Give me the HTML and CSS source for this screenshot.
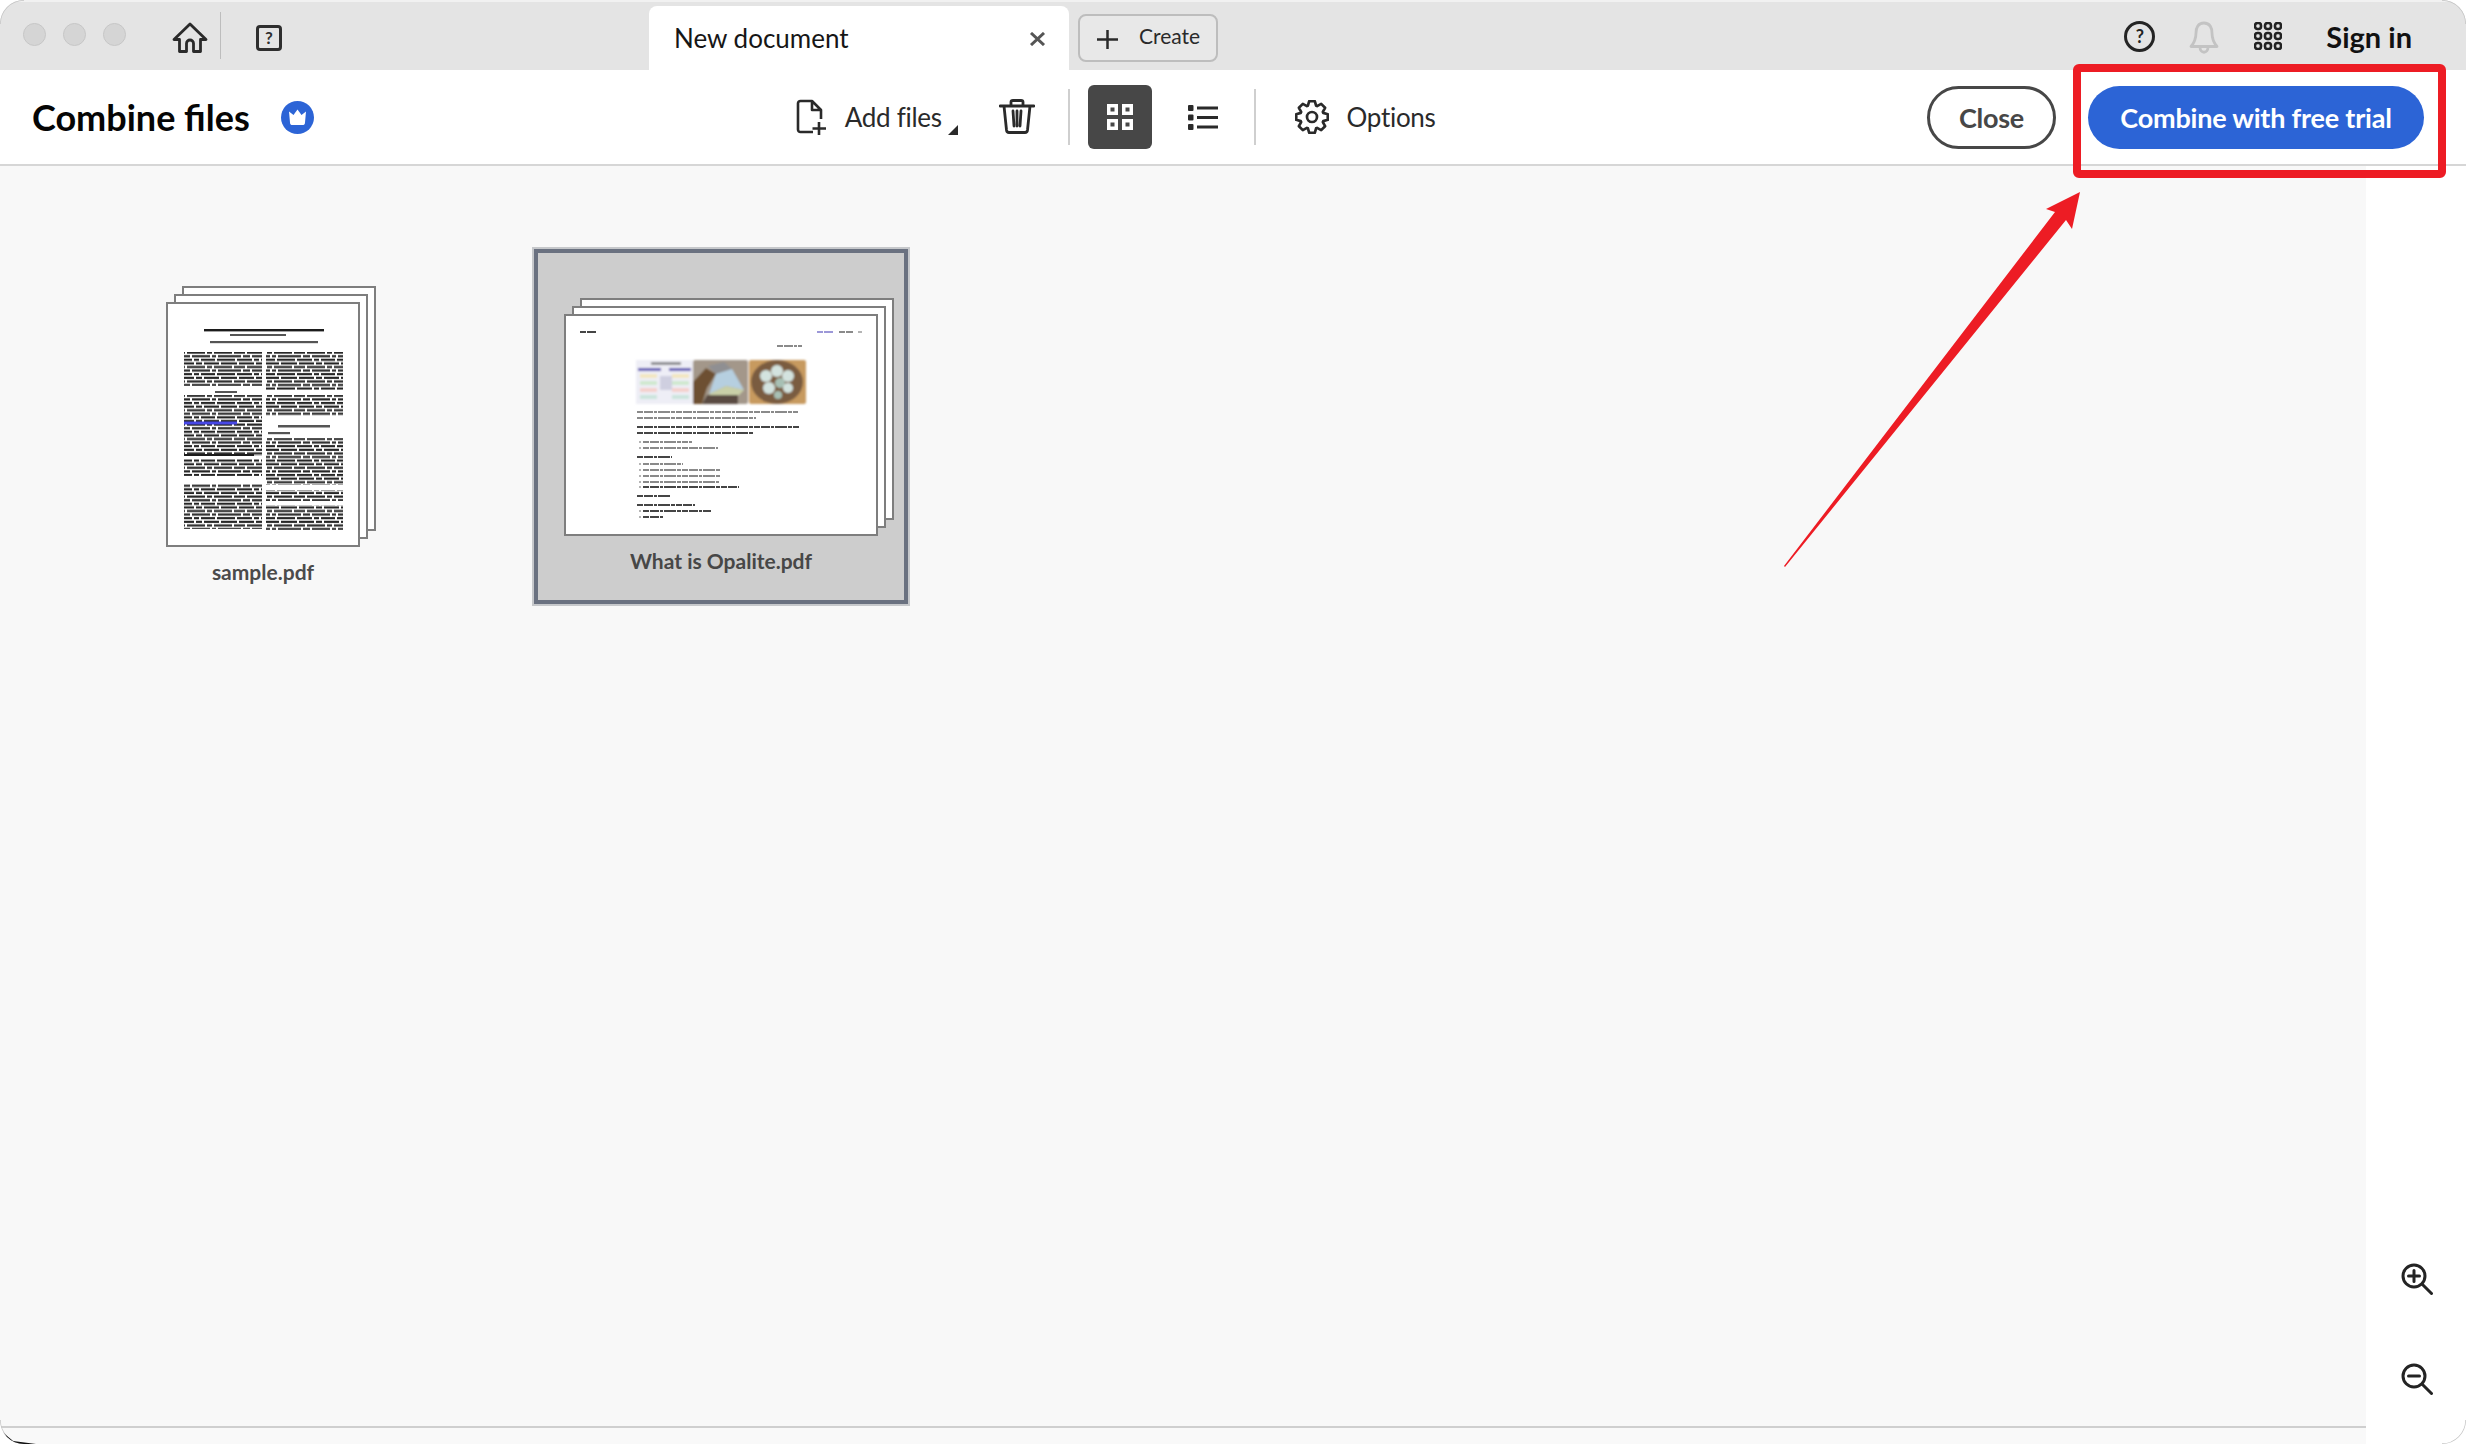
FILE: index.html
```html
<!DOCTYPE html>
<html lang="en">
<head>
<meta charset="utf-8">
<title>Combine files</title>
<link rel="stylesheet" href="styles.css">
</head>
<body>
<div class="window">
  <header class="titlebar">
    <div class="lights"><span class="light"></span><span class="light"></span><span class="light"></span></div>
    <svg class="ico-home" viewBox="0 0 36 32"><path d="M18 2 34 17.500H28.500V29.500H21.500V21.500A3.500 3.500 0 0 0 14.500 21.500V29.500H7.500V17.500H2Z"/></svg>
    <span class="tb-sep"></span>
    <span class="ico-qsquare">?</span>
    <div class="tab"><span class="tab-name">New document</span><svg class="ico-x" viewBox="0 0 17 14"><path d="M2 1 15 13M15 1 2 13"/></svg></div>
    <button class="create"><svg class="ico-plus" viewBox="0 0 21 19"><path d="M10.500 0V19M0 9.500H21"/></svg><span>Create</span></button>
    <div class="tb-right">
      <span class="ico-qcircle">?</span>
      <svg class="ico-bell" viewBox="0 0 30 33"><path d="M15 2C9 2 7 7 7 12 7 18 5 22 2 25.500H28C25 22 23 18 23 12 23 7 21 2 15 2ZM11 26C11 33 19 33 19 26"/></svg>
      <svg class="ico-apps" viewBox="0 0 28 28"><g><rect x="1" y="1" width="6" height="6" rx="2.500"/><rect x="11" y="1" width="6" height="6" rx="2.500"/><rect x="21" y="1" width="6" height="6" rx="2.500"/><rect x="1" y="11" width="6" height="6" rx="2.500"/><rect x="11" y="11" width="6" height="6" rx="2.500"/><rect x="21" y="11" width="6" height="6" rx="2.500"/><rect x="1" y="21" width="6" height="6" rx="2.500"/><rect x="11" y="21" width="6" height="6" rx="2.500"/><rect x="21" y="21" width="6" height="6" rx="2.500"/></g></svg>
      <span class="signin">Sign in</span>
    </div>
  </header>

  <div class="toolbar">
    <h1 class="title">Combine files</h1>
    <svg class="badge" viewBox="0 0 33 33"><circle cx="16.500" cy="16.500" r="16.500"/><path d="M8 10.500 12.500 14 16.500 8.500 20.500 14 25 10.500 24 21.500C24 23.500 23 24 21.500 24H11.500C10 24 9 23.500 9 21.500Z"/></svg>
    <div class="tools">
      <svg class="ico-add" viewBox="0 0 32 37"><path d="M17 33H4.500C3 33 2 32 2 30.500V4.500C2 3 3 2 4.500 2H16L25 11V20M16 2V11H25M23 23V36M16.500 29.500H30"/></svg>
      <span class="tool-label add-label">Add files</span>
      <span class="corner"></span>
      <svg class="ico-trash" viewBox="0 0 36 35"><path d="M1 7H35M12 7V3C12 2 13 1.500 14 1.500H22C23 1.500 24 2 24 3V7M5 7 7.500 31C7.700 32.500 8.500 33.500 10 33.500H26C27.500 33.500 28.300 32.500 28.500 31L31 7M14 12 15 27M22 12 21 27M18 12V27"/></svg>
      <span class="tool-sep sep-a"></span>
      <span class="grid-btn"><svg class="ico-grid" viewBox="0 0 28 28"><path d="M1 1H12V12H1ZM16 1H27V12H16ZM1 16H12V27H1ZM16 16H27V27H16Z"/><path class="grid-holes" d="M4.500 4.500H8.500V8.500H4.500ZM19.500 4.500H23.500V8.500H19.500ZM4.500 19.500H8.500V23.500H4.500ZM19.500 19.500H23.500V23.500H19.500Z"/></svg></span>
      <svg class="ico-list" viewBox="0 0 30 27"><path d="M9 4H30M9 13.500H30M9 23H30" class="list-lines"/><rect x="0" y="1" width="5.500" height="6" rx="1"/><rect x="0" y="10.500" width="5.500" height="6" rx="1"/><rect x="0" y="20" width="5.500" height="6" rx="1"/></svg>
      <span class="tool-sep sep-b"></span>
      <svg class="ico-gear" viewBox="0 0 34 34"><path d="M12.900 5.720 14.220 1.240H19.780L21.100 5.720 22.070 6.130 26.180 3.900 30.100 7.820 27.870 11.930 28.280 12.900 32.760 14.220V19.780L28.280 21.100 27.870 22.070 30.100 26.180 26.180 30.100 22.070 27.870 21.100 28.280 19.780 32.760H14.220L12.900 28.280 11.930 27.870 7.820 30.100 3.900 26.180 6.130 22.070 5.720 21.100 1.240 19.780V14.220L5.720 12.900 6.130 11.930 3.900 7.820 7.820 3.900 11.930 6.130Z"/><circle cx="17" cy="17" r="5"/></svg>
      <span class="tool-label">Options</span>
    </div>
    <button class="btn-close">Close</button>
    <button class="btn-primary">Combine with free trial</button>
  </div>

  <div class="body-row">
    <div class="left-col">
      <main class="canvas">
        <figure class="file">
          <div class="stack stack-tall">
            <div class="sheet sheet-back"></div>
            <div class="sheet sheet-mid"></div>
            <div class="sheet sheet-front">
              <svg class="thumb" viewBox="0 0 190 241">
                <defs>
                  <filter id="soft" x="-5%" y="-5%" width="110%" height="110%"><feGaussianBlur stdDeviation="0.65"/></filter>
                  <filter id="softer" x="-5%" y="-5%" width="110%" height="110%"><feGaussianBlur stdDeviation="1"/></filter>
                  <pattern id="words" width="60" height="14.400" patternUnits="userSpaceOnUse">
                    <path class="ink-text" d="M0 .7H9V2.900H0ZM11 .7H26V2.900H11ZM28 .7H34V2.900H28ZM36 .7H51V2.900H36ZM53 .7H60V2.900H53ZM0 4.300H4V6.500H0ZM6 4.300H17V6.500H6ZM19 4.300H37V6.500H19ZM39 4.300H44V6.500H39ZM46 4.300H60V6.500H46ZM0 7.900H13V10.100H0ZM15 7.900H22V10.100H15ZM24 7.900H42V10.100H24ZM44 7.900H48V10.100H44ZM50 7.900H60V10.100H50ZM0 11.500H7V13.700H0ZM9 11.500H24V13.700H9ZM26 11.500H31V13.700H26ZM33 11.500H47V13.700H33ZM49 11.500H60V13.700H49Z"/>
                  </pattern>
                </defs>
                <g filter="url(#soft)">
                  <rect class="ink" x="36" y="25" width="120" height="2.400"/>
                  <rect class="ink-mid" x="62" y="30" width="56" height="2"/>
                  <rect class="ink-mid" x="42" y="37" width="108" height="2.200"/>
                  <rect x="16" y="48" width="78" height="34" fill="url(#words)"/>
                  <rect class="ink-mid" x="47" y="87" width="22" height="2"/>
                  <rect x="16" y="91" width="78" height="61" fill="url(#words)"/>
                  <rect class="ink-blue" x="16" y="117.500" width="53" height="3"/>
                  <rect class="ink" x="16" y="150" width="70" height="2"/>
                  <rect x="16" y="155" width="78" height="17" fill="url(#words)"/>
                  <rect x="16" y="180" width="78" height="45" fill="url(#words)"/>
                  <rect x="98" y="48" width="77" height="38" fill="url(#words)"/>
                  <rect x="98" y="91" width="77" height="21" fill="url(#words)"/>
                  <rect class="ink-mid" x="110" y="121" width="52" height="2.500"/>
                  <rect class="ink-mid" x="100" y="128" width="22" height="2.200"/>
                  <rect x="98" y="134" width="77" height="47" fill="url(#words)"/>
                  <rect x="98" y="186" width="77" height="11" fill="url(#words)"/>
                  <rect x="98" y="201" width="77" height="25" fill="url(#words)"/>
                </g>
              </svg>
            </div>
          </div>
          <figcaption class="file-name">sample.pdf</figcaption>
        </figure>

        <figure class="file file-selected">
          <div class="stack stack-wide">
            <div class="sheet sheet-back"></div>
            <div class="sheet sheet-mid"></div>
            <div class="sheet sheet-front">
              <svg class="thumb" viewBox="0 0 310 218">
                <g filter="url(#soft)">
                  <path class="t-dark" d="M14 16H30"/>
                  <path class="t-violet" d="M251 16H267"/>
                  <path class="t-mid" d="M273 16H287M211 30H236"/>
                  <path class="t-pale" d="M292 16H296"/>
                  <path class="t-mid" d="M71 96H232M71 102H190M77 126H126M77 132H152M77 148H117M77 154H154M77 160H155M77 166H153"/>
                  <path class="t-dark" d="M71 111H234M71 117H188M71 141H106M77 171H173M71 180H104M71 189H129M77 195H145M77 201H97"/>
                  <path class="t-pale" d="M73 126H75M73 132H75M73 148H75M73 154H75M73 160H75M73 166H75M73 171H75M73 195H75M73 201H75"/>
                </g>
                <g filter="url(#softer)">
                  <rect class="p1" x="70" y="44" width="57" height="44"/>
                  <rect class="p1-a" x="72" y="52" width="23" height="3"/><rect class="p1-a" x="103" y="52" width="22" height="3"/>
                  <rect class="ink-mid" x="85" y="46.500" width="30" height="2"/>
                  <rect class="p1-b" x="74" y="58" width="17" height="4"/><rect class="p1-c" x="74" y="65" width="17" height="4"/><rect class="p1-d" x="74" y="72" width="17" height="4"/><rect class="p1-e" x="74" y="79" width="17" height="4"/>
                  <rect class="p1-b" x="106" y="58" width="17" height="4"/><rect class="p1-c" x="106" y="65" width="17" height="4"/><rect class="p1-d" x="106" y="72" width="17" height="4"/><rect class="p1-e" x="106" y="79" width="17" height="4"/>
                  <rect class="p1-f" x="94" y="60" width="12" height="14"/>
                  <rect class="p2" x="127" y="44" width="55" height="44" rx="2"/>
                  <path class="p2-g" d="M142 50 158 46 166 53 150 58Z"/>
                  <path class="p2-b" d="M127 66 140 52 150 58 141 72 136 88H127Z"/>
                  <path class="p2-a" d="M143 78 150 58 166 53 178 74 160 70Z"/>
                  <path class="p2-e" d="M143 78 160 70 178 74 172 80H146Z"/>
                  <path class="p2-c" d="M136 88 141 79H172V88Z"/>
                  <rect class="p3" x="183" y="44" width="57" height="44" rx="2"/>
                  <ellipse class="p3-r" cx="211" cy="66" rx="26" ry="22"/>
                  <circle class="p3-b" cx="200" cy="60" r="6"/><circle class="p3-b" cx="211" cy="55" r="6"/><circle class="p3-b" cx="222" cy="60" r="6"/><circle class="p3-b" cx="203" cy="72" r="6"/><circle class="p3-c" cx="214" cy="67" r="5"/><circle class="p3-b" cx="222" cy="72" r="5"/><circle class="p3-c" cx="212" cy="79" r="4"/>
                </g>
              </svg>
            </div>
          </div>
          <figcaption class="file-name">What is Opalite.pdf</figcaption>
        </figure>
      </main>
      <footer class="status"></footer>
    </div>
    <aside class="rail">
      <svg class="ico-zoom" viewBox="0 0 32 32"><circle cx="13" cy="13" r="11"/><path d="M21 21 30.500 30.500M7.500 13H18.500M13 7.500V18.500"/></svg>
      <svg class="ico-zoom" viewBox="0 0 32 32"><circle cx="13" cy="13" r="11"/><path d="M21 21 30.500 30.500M7.500 13H18.500"/></svg>
    </aside>
  </div>

  <svg class="annot" viewBox="0 0 2466 1444">
    <path class="corner-arc" d="M0 24A24 24 0 0 1 24 0M2466 24A24 24 0 0 0 2442 0M2466 1420A24 24 0 0 1 2442 1444M0 1420A24 24 0 0 0 24 1444"/>
    <path class="blob" d="M0 1430 13 1441 36 1444H0Z"/>
    <circle class="blob-dot" cx="4" cy="1442" r="2.500"/>
    <rect class="red-box" x="2077" y="68" width="365" height="106" rx="2"/>
    <path class="red-arrow" d="M1784 566 2055 212 2046 209 2080 192 2072 229 2066 220 1785 567Z"/>
  </svg>
</div>
</body>
</html>
```
FILE: styles.css
```css
* { box-sizing: border-box; }
html, body { margin: 0; padding: 0; background: #fff; }
body { font-family: "Lato", "Noto Sans", sans-serif; color: #1c1c1c; }
button { font-family: inherit; cursor: default; }
svg { display: block; flex: none; }

.window {
  position: relative;
  width: 2466px;
  height: 1444px;
  display: flex;
  flex-direction: column;
  overflow: hidden;
  border-radius: 24px;
  background: #fff;
}

/* title bar */
.titlebar {
  height: 70px;
  flex: none;
  display: flex;
  align-items: center;
  background: #e4e4e4;
  border-top: 2px solid #f1f1f1;
  padding-left: 23px;
}
.lights { display: flex; gap: 17px; margin-top: -4px; }
.light { width: 23px; height: 23px; border-radius: 50%; background: #d5d5d5; border: 1px solid #c6c6c6; }
.ico-home { width: 36px; height: 32px; margin-left: 46px; margin-top: 3px; }
.ico-home path { fill: none; stroke: #2a2a2a; stroke-width: 2.800; stroke-linejoin: round; }
.tb-sep { width: 1px; height: 47px; background: #bdbdbd; margin-left: 12px; margin-top: -2px; }
.ico-qsquare {
  width: 26px; height: 26px; margin-left: 35px; margin-top: 4px;
  border: 3px solid #2e2e2e; border-radius: 4px;
  font-size: 17px; font-weight: 700; line-height: 20px; text-align: center; color: #2e2e2e;
}
.tab {
  align-self: flex-end;
  width: 420px; height: 64px; margin-left: 367px;
  background: #fff;
  border-radius: 8px 8px 0 0;
  display: flex; align-items: center;
  padding: 0 23px 0 25px;
  justify-content: space-between;
}
.tab-name { font-size: 26px; color: #161616; }
.ico-x { width: 17px; height: 14px; margin-top: 2px; }
.ico-x path { fill: none; stroke: #555; stroke-width: 3; }
.create {
  width: 140px; height: 48px; margin-left: 9px; margin-top: 4px;
  display: flex; align-items: center; padding: 0 0 0 17px;
  background: #e8e8e8; border: 2px solid #bdbdbd; border-radius: 8px;
  font-size: 21px; color: #2a2a2a;
}
.create span { margin-left: 21px; margin-top: -6px; }
.ico-plus { width: 21px; height: 19px; margin-top: 2px; }
.ico-plus path { fill: none; stroke: #2a2a2a; stroke-width: 2.500; }
.tb-right { margin-left: auto; display: flex; align-items: center; padding-right: 54px; }
.ico-qcircle {
  width: 31px; height: 31px; border: 3px solid #242424; border-radius: 50%;
  font-size: 18px; font-weight: 700; line-height: 25px; text-align: center; color: #242424;
}
.ico-bell { width: 30px; height: 33px; margin-left: 34px; margin-top: 3px; }
.ico-bell path { fill: none; stroke: #c3c3c3; stroke-width: 2.800; stroke-linejoin: round; }
.ico-apps { width: 28px; height: 28px; margin-left: 35px; }
.ico-apps rect { fill: none; stroke: #222; stroke-width: 2.600; }
.signin { font-size: 29px; font-weight: 700; color: #111; margin-left: 44px; }

/* tool bar */
.toolbar {
  height: 96px;
  flex: none;
  display: flex;
  align-items: center;
  padding: 0 42px 0 32px;
  border-bottom: 2px solid #d6d6d6;
  background: #fff;
}
.title { margin: 0; font-size: 36px; font-weight: 700; color: #050505; white-space: nowrap; }
.badge { width: 33px; height: 33px; margin-left: 31px; }
.badge circle { fill: #2c64d6; }
.badge path { fill: #fff; }
.tools { display: flex; align-items: center; margin-left: 482px; position: relative; }
.ico-add { width: 32px; height: 37px; }
.ico-add path { fill: none; stroke: #2a2a2a; stroke-width: 2.600; stroke-linejoin: round; }
.tool-label { font-size: 26px; letter-spacing: -0.3px; color: #2a2a2a; white-space: nowrap; }
.add-label { margin-left: 17px; }
.corner {
  width: 0; height: 0; margin-left: 6px; margin-top: 25px;
  border-style: solid; border-width: 0 0 10px 10px;
  border-color: transparent transparent #2a2a2a transparent;
}
.ico-trash { width: 36px; height: 35px; margin-left: 41px; margin-top: -2px; }
.ico-trash path { fill: none; stroke: #2a2a2a; stroke-width: 2.800; stroke-linejoin: round; stroke-linecap: round; }
.tool-sep { width: 2px; height: 56px; background: #cfcfcf; }
.sep-a { margin-left: 33px; }
.grid-btn {
  width: 64px; height: 64px; margin-left: 18px; border-radius: 6px; background: #474747;
  display: flex; align-items: center; justify-content: center;
}
.ico-grid { width: 28px; height: 28px; }
.ico-grid path { fill: #fff; }
.ico-grid .grid-holes { fill: #474747; }
.ico-list { width: 30px; height: 27px; margin-left: 36px; }
.ico-list rect { fill: #2a2a2a; }
.list-lines { fill: none; stroke: #2a2a2a; stroke-width: 3; }
.sep-b { margin-left: 36px; }
.ico-gear { width: 34px; height: 34px; margin-left: 39px; }
.ico-gear path, .ico-gear circle { fill: none; stroke: #2a2a2a; stroke-width: 2.700; stroke-linejoin: round; }
.ico-gear + .tool-label { margin-left: 18px; }
.btn-close {
  width: 129px; height: 63px; margin-left: auto;
  border: 3.500px solid #474747; border-radius: 32px; background: #fff;
  font-size: 27px; letter-spacing: -0.3px; font-weight: 700; color: #474747;
}
.btn-primary {
  width: 336px; height: 63px; margin-left: 32px;
  border: 0; border-radius: 32px; background: #2c64d6;
  font-size: 27px; letter-spacing: -0.2px; font-weight: 700; color: #fff; white-space: nowrap;
}

/* body */
.body-row { flex: 1; display: flex; min-height: 0; }
.left-col { flex: 1; display: flex; flex-direction: column; min-width: 0; }
.canvas {
  flex: 1; display: flex; align-items: flex-start;
  background: #f8f8f8;
  padding: 83px 0 0 166px;
}
.status { height: 18px; flex: none; border-top: 2px solid #cfcfcf; background: #f9f9f9; }
.rail { width: 100px; flex: none; background: #fff; display: flex; flex-direction: column; justify-content: flex-end; align-items: center; gap: 68px; padding: 0 0 49px 2px; }
.ico-zoom { width: 32px; height: 32px; }
.ico-zoom circle, .ico-zoom path { fill: none; stroke: #242424; stroke-width: 3; stroke-linecap: round; }

/* thumbnails */
.file { margin: 0; }
.file:first-child { margin-top: 37px; }
.stack { position: relative; }
.stack-tall { width: 210px; height: 261px; }
.stack-wide { width: 330px; height: 238px; }
.sheet { position: absolute; background: #fff; border: 2px solid #7e7e7e; }
.stack-tall .sheet { width: 194px; height: 245px; }
.stack-wide .sheet { width: 314px; height: 222px; }
.sheet-back { left: 16px; top: 0; }
.sheet-mid { left: 8px; top: 8px; }
.sheet-front { left: 0; top: 16px; }
.thumb { width: 100%; height: 100%; }
.file-name { font-size: 21px; font-weight: 700; color: #4b4b4b; line-height: 26px; margin-top: 12px; width: 194px; text-align: center; }
.file-selected {
  width: 374px; height: 355px;
  margin-left: 158px;
  border: 4px solid #6a7180;
  box-shadow: 0 0 0 2px #c6c8cb;
  background: #cdcdcd;
  padding: 45px 0 0 26px;
}
.file-selected .file-name { width: 314px; margin-top: 12px; color: #474747; }

/* thumbnail ink */
.ink { fill: #1e1e1e; }
.ink-text { fill: #262626; }
.ink-mid { fill: #555; }
.ink-blue { fill: #4646e6; }
.t-dark, .t-mid, .t-pale, .t-violet { fill: none; stroke-width: 2; stroke-dasharray: 6 1 9 1 3 1 12 1 4 1; }
.t-dark { stroke: #444; }
.t-mid { stroke: #8a8a8a; }
.t-pale { stroke: #b4b4b4; }
.t-violet { stroke: #9c98d8; }
.p1 { fill: #eeeef6; }
.p1-a { fill: #5a4fb4; }
.p1-b { fill: #f3e6c0; }
.p1-c { fill: #cfe8cf; }
.p1-d { fill: #f4d0cc; }
.p1-e { fill: #cbe4dc; }
.p1-f { fill: #cfcfe0; }
.p2 { fill: #a3978a; }
.p2-a { fill: #b6cfe0; }
.p2-b { fill: #6d5030; }
.p2-c { fill: #5a4c42; }
.p2-e { fill: #c9d0a8; }
.p2-g { fill: #8f8f92; }
.p3 { fill: #c79a5e; }
.p3-r { fill: #7a5c40; }
.p3-b { fill: #d3e3df; }
.p3-c { fill: #a7c0b4; }

/* annotation overlay */
.annot { position: absolute; inset: 0; width: 2466px; height: 1444px; pointer-events: none; }
.corner-arc { fill: none; stroke: #c4c4c4; stroke-width: 1.500; }
.blob { fill: #111; }
.blob-dot { fill: #fff; }
.red-box { fill: none; stroke: #ed1c24; stroke-width: 8; }
.red-arrow { fill: #ed1c24; }
```
